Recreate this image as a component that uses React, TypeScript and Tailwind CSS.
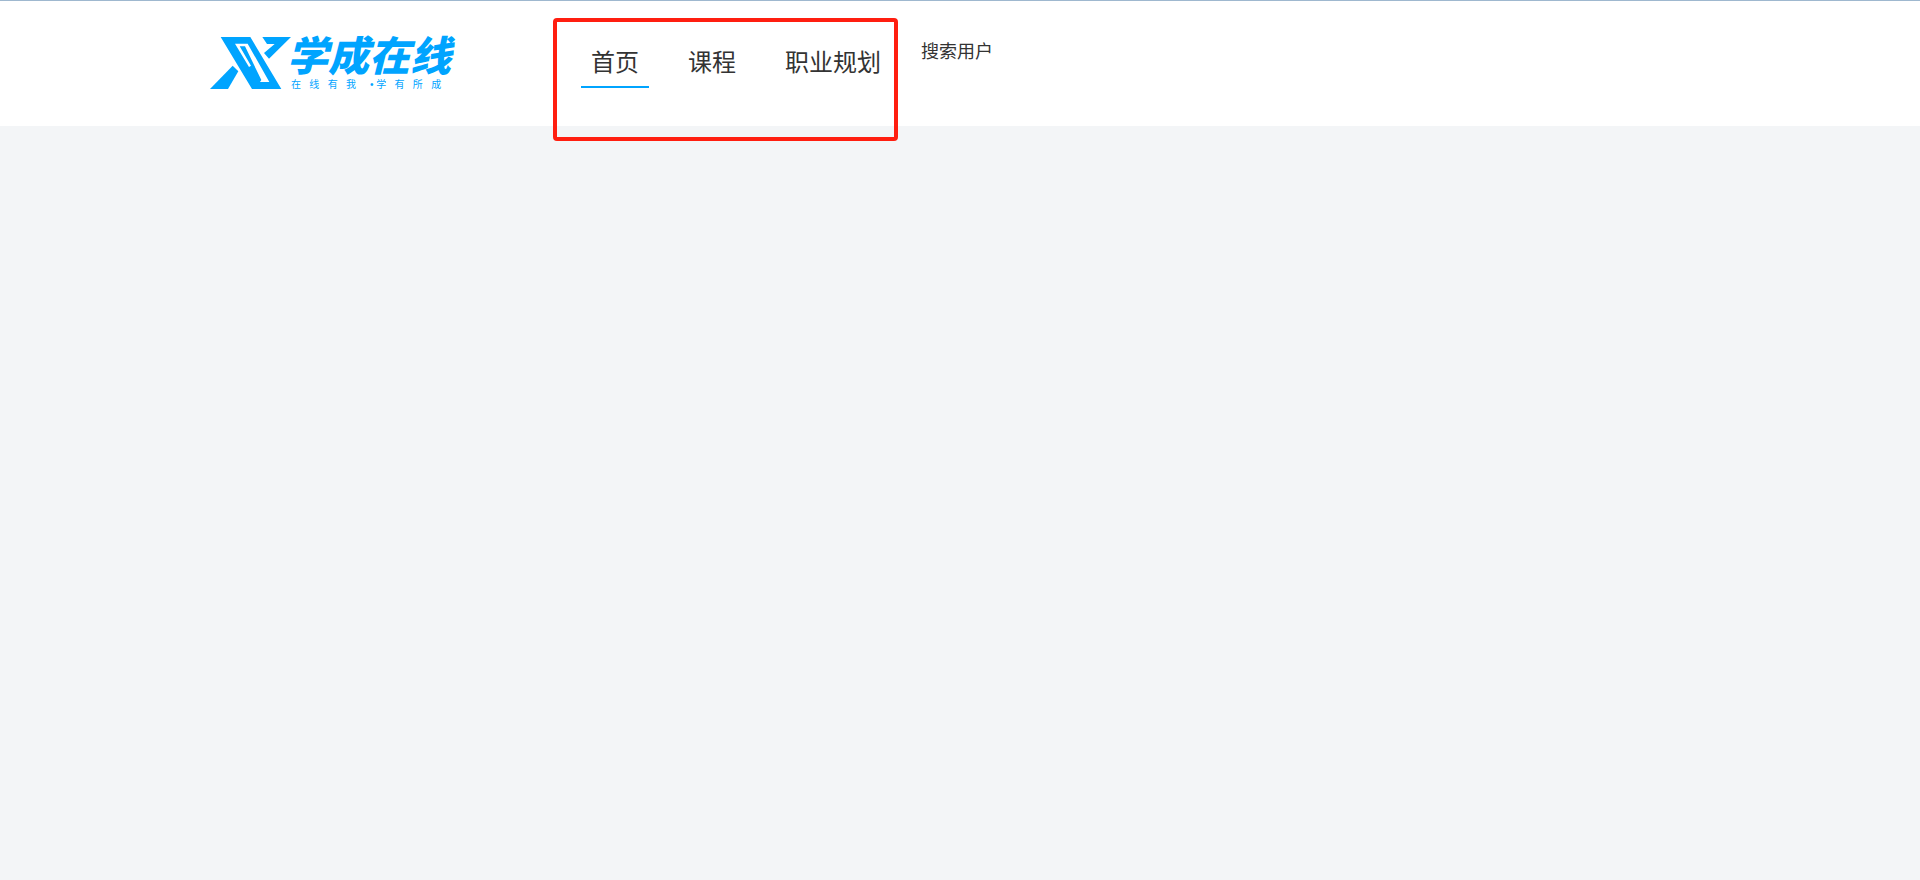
const links = [
  { label: "首页", active: true },
  { label: "课程", active: false },
  { label: "职业规划", active: false },
];

function Logo() {
  return (
    <a href="#" aria-label="学成在线" className="flex w-[245px] shrink-0 text-[#00a4ff]">
      <svg viewBox="30 51 243 156" className="h-[52px] w-[81px] shrink-0" fill="currentColor" aria-hidden="true">
        <path
          fillRule="evenodd"
          d="M62 51H151L244 207H156ZM105 71L147 141L153 137L119 79H135L184 180L180 186H208L143 71Z"
        />
        <path d="M187 51H273L207 116L192 99L224 72H201Z" />
        <path d="M30 207L98 137L115 154L84 207Z" />
      </svg>
      <span className="flex flex-col">
        <span className="-ml-1 h-[42px] pt-0.5 whitespace-nowrap text-[41px] leading-9 font-black italic">学成在线</span>
        <span className="whitespace-pre text-[10px] leading-3">在   线   有   我     • 学   有   所   成</span>
      </span>
    </a>
  );
}

export default function App() {
  return (
    <div className="min-h-screen bg-[#f3f5f7] font-['Liberation_Sans','Noto_Sans_CJK_SC',sans-serif] text-[#333]">
      <header className="h-[126px] border-t border-[#9fb8cf] bg-white">
        <div className="flex items-start pl-[210px]">
          <div className="pt-9">
            <Logo />
          </div>
          {/* Main nav */}
          <nav className="ml-[98px] mt-[17px] h-[123px] w-[345px] shrink-0 rounded-sm border-4 border-[#ff1e10] pl-6 pt-[25px]">
            <ul className="flex gap-[29px]">
              {links.map((link) => (
                <li key={link.label}>
                  <a
                    href="#"
                    className={`block border-b-2 px-2.5 pb-[7px] text-2xl leading-8 whitespace-nowrap ${
                      link.active ? "border-[#00a4ff]" : "border-transparent"
                    }`}
                  >
                    {link.label}
                  </a>
                </li>
              ))}
            </ul>
          </nav>
          <a href="#" className="ml-[23px] mt-[37px] text-lg leading-7 whitespace-nowrap">搜索用户</a>
        </div>
      </header>
    </div>
  );
}
